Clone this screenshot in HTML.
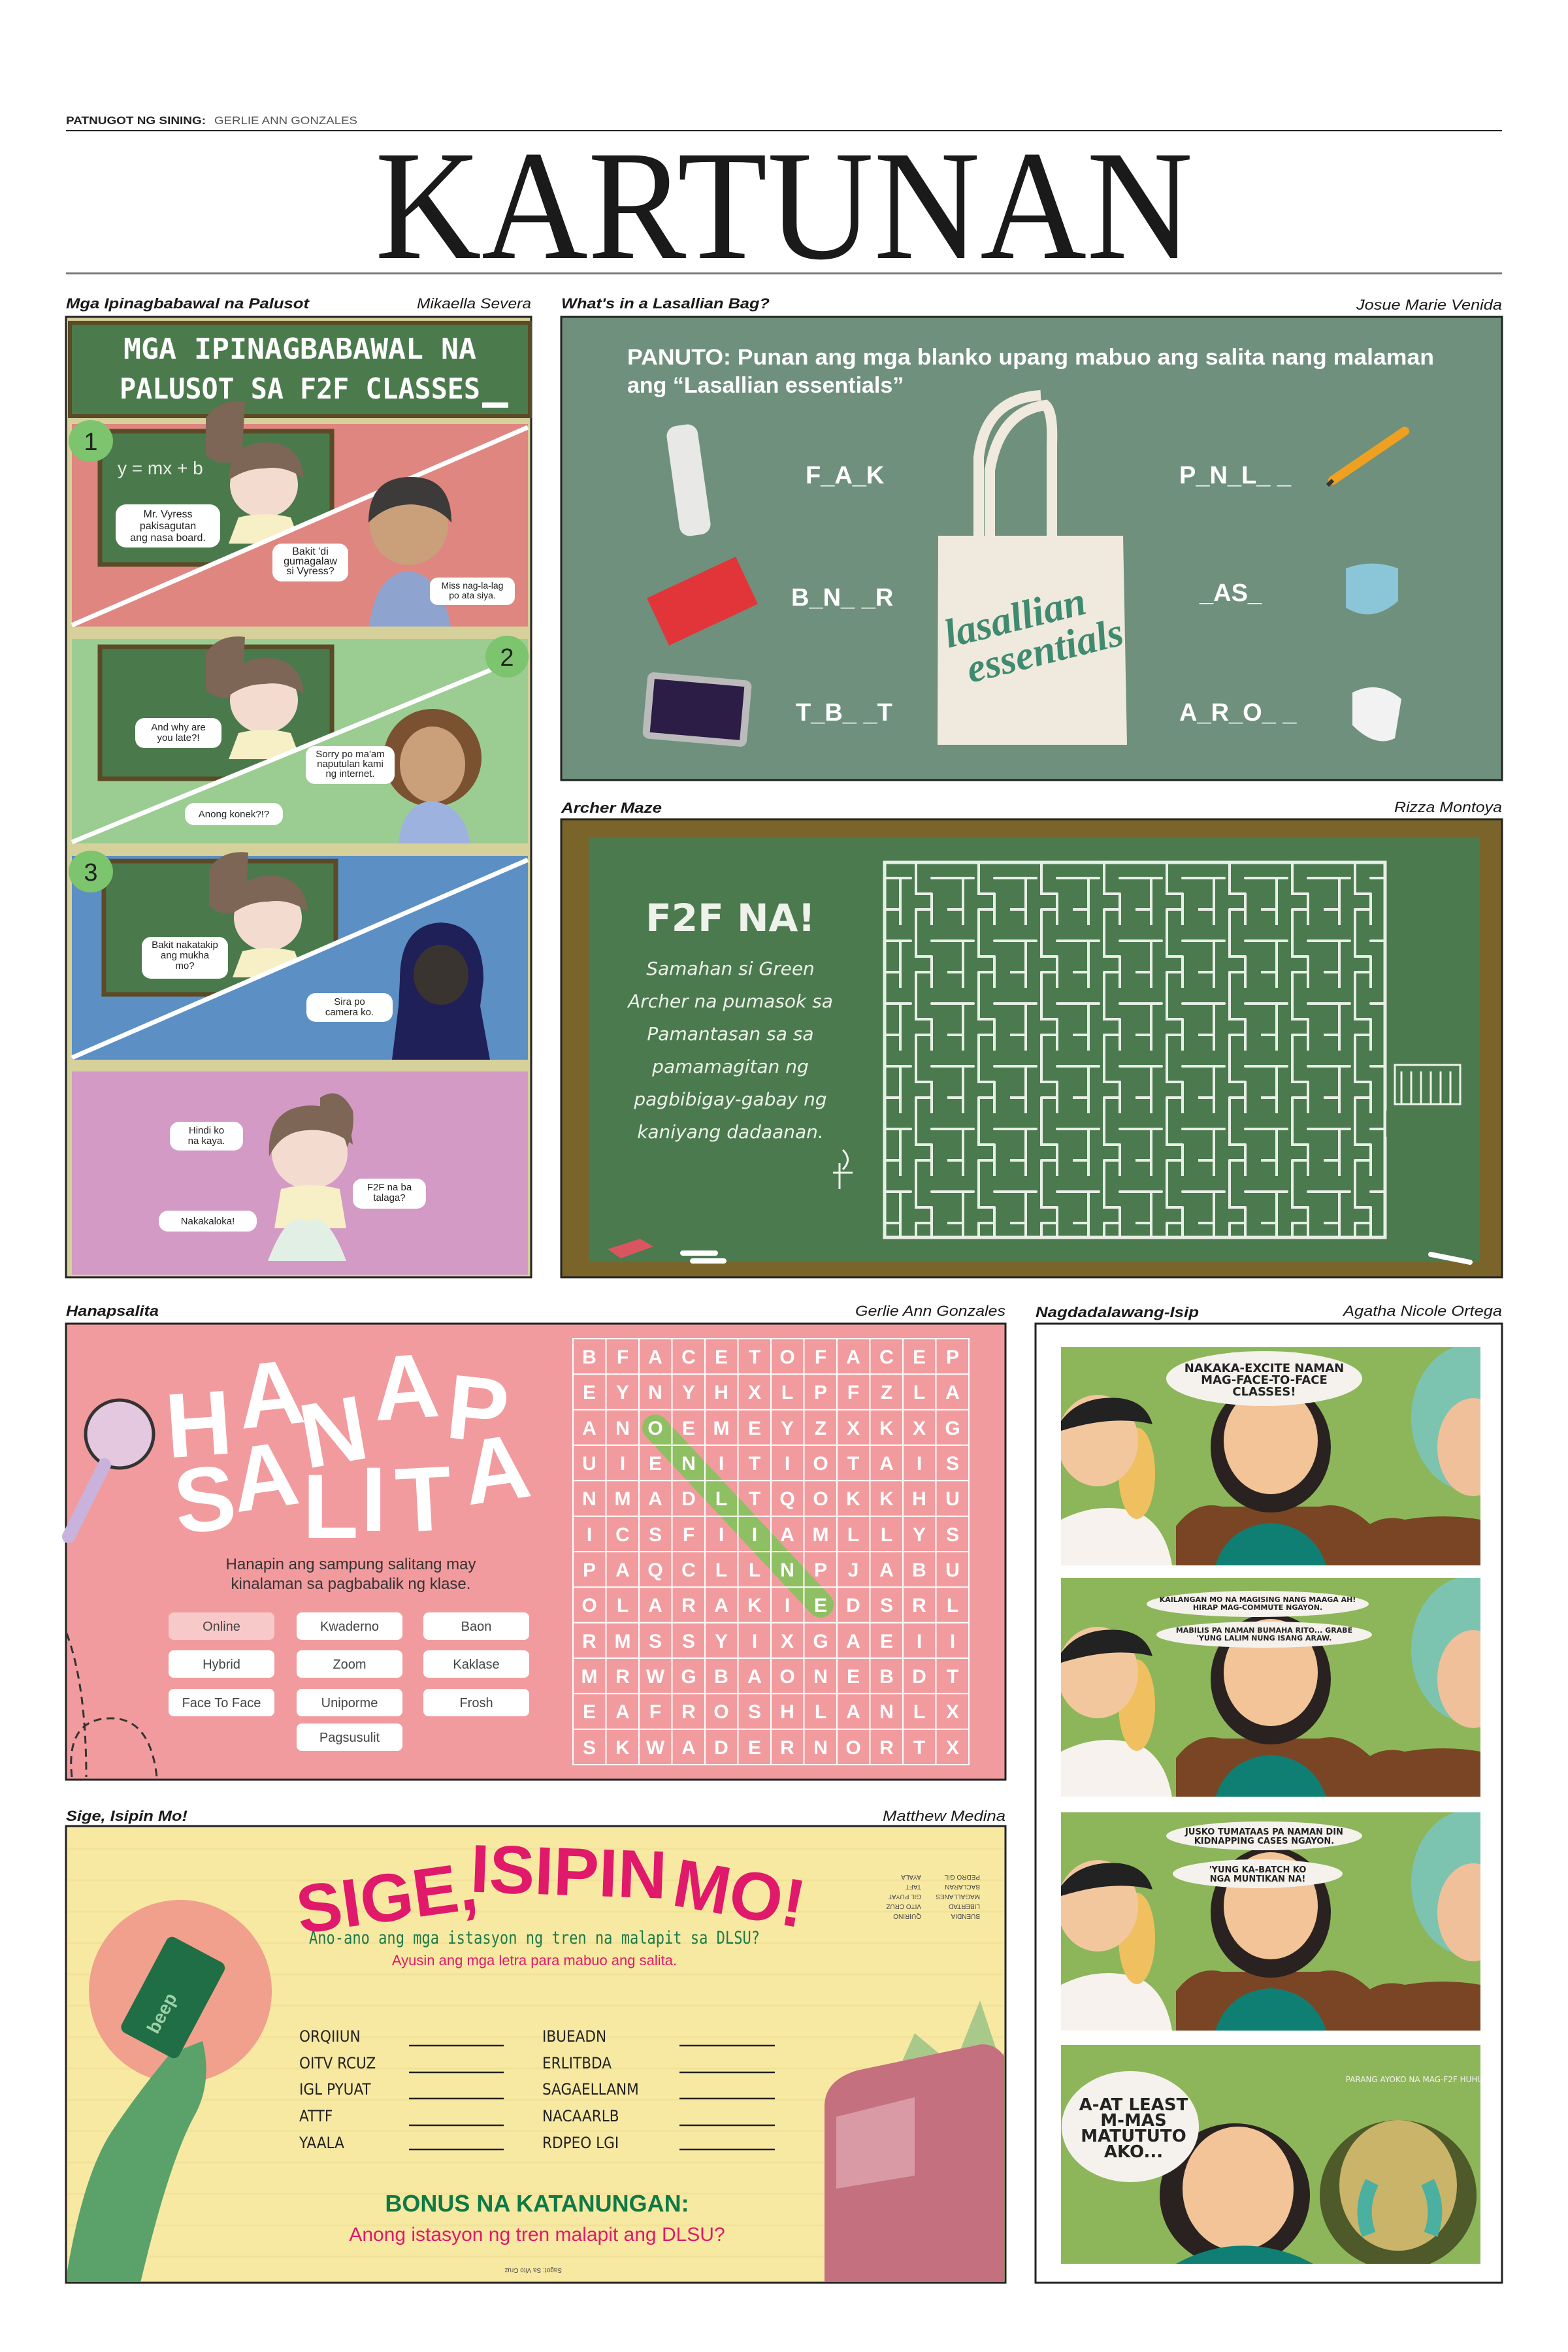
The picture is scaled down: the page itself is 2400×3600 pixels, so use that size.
<!DOCTYPE html>
<html><head><meta charset="utf-8"><style>html,body{margin:0;padding:0;background:#fff}svg{display:block}</style></head><body>
<svg width="2400" height="3600" viewBox="0 0 2400 3600" xmlns="http://www.w3.org/2000/svg" font-family="Liberation Sans, sans-serif">
<defs>
<pattern id="mz" x="1354" y="1320" width="96" height="96" patternUnits="userSpaceOnUse">
<g stroke="#e8efe6" stroke-width="4" fill="none" stroke-linecap="round">
<path d="M0 24H40M24 24V72M48 0V48H72M72 24H96M72 48V96M0 72H24M48 72H72M24 96V72M48 96V72"/>
</g></pattern>
<pattern id="lines" x="0" y="0" width="40" height="48" patternUnits="userSpaceOnUse"><path d="M0 46H40" stroke="#efdf95" stroke-width="3"/></pattern>
<clipPath id="c1"><rect x="1624" y="2062" width="642" height="334"/></clipPath>
<clipPath id="c2"><rect x="1624" y="2415" width="642" height="335"/></clipPath>
<clipPath id="c3"><rect x="1624" y="2774" width="642" height="334"/></clipPath>
<clipPath id="c4"><rect x="1624" y="3130" width="642" height="335"/></clipPath>
<clipPath id="cs"><rect x="103" y="2797" width="1434" height="695"/></clipPath>
</defs>

<!-- header -->
<text x="101" y="190" font-size="17" font-weight="bold" textLength="214" lengthAdjust="spacingAndGlyphs" fill="#222">PATNUGOT NG SINING:</text>
<text x="328" y="190" font-size="17" textLength="219" lengthAdjust="spacingAndGlyphs" fill="#555">GERLIE ANN GONZALES</text>
<rect x="101" y="199" width="2198" height="2" fill="#222"/>
<text x="574" y="395" font-family="Liberation Serif, serif" font-size="240" textLength="1252" lengthAdjust="spacingAndGlyphs" fill="#1a1a1a">KARTUNAN</text>
<rect x="101" y="417" width="2198" height="3" fill="#777"/>

<!-- section labels -->
<g font-size="22" fill="#1a1a1a">
<text x="101" y="472" font-weight="bold" font-style="italic" textLength="372" lengthAdjust="spacingAndGlyphs">Mga Ipinagbabawal na Palusot</text>
<text x="638" y="472" font-style="italic" textLength="175" lengthAdjust="spacingAndGlyphs">Mikaella Severa</text>
<text x="859" y="472" font-weight="bold" font-style="italic" textLength="319" lengthAdjust="spacingAndGlyphs">What's in a Lasallian Bag?</text>
<text x="2076" y="474" font-style="italic" textLength="223" lengthAdjust="spacingAndGlyphs">Josue Marie Venida</text>
<text x="859" y="1244" font-weight="bold" font-style="italic" textLength="154" lengthAdjust="spacingAndGlyphs">Archer Maze</text>
<text x="2134" y="1243" font-style="italic" textLength="165" lengthAdjust="spacingAndGlyphs">Rizza Montoya</text>
<text x="101" y="2014" font-weight="bold" font-style="italic" textLength="142" lengthAdjust="spacingAndGlyphs">Hanapsalita</text>
<text x="1309" y="2014" font-style="italic" textLength="230" lengthAdjust="spacingAndGlyphs">Gerlie Ann Gonzales</text>
<text x="1585" y="2016" font-weight="bold" font-style="italic" textLength="250" lengthAdjust="spacingAndGlyphs">Nagdadalawang-Isip</text>
<text x="2056" y="2014" font-style="italic" textLength="243" lengthAdjust="spacingAndGlyphs">Agatha Nicole Ortega</text>
<text x="101" y="2787" font-weight="bold" font-style="italic" textLength="186" lengthAdjust="spacingAndGlyphs">Sige, Isipin Mo!</text>
<text x="1351" y="2787" font-style="italic" textLength="188" lengthAdjust="spacingAndGlyphs">Matthew Medina</text>
</g>

<!-- ===== Panel 1 comic ===== -->
<rect x="101" y="485" width="712" height="1470" fill="#d6d09a" stroke="#222" stroke-width="3"/>
<rect x="107" y="494" width="704" height="143" fill="#4b7a4c" stroke="#5b4a26" stroke-width="6"/>
<g fill="#fff" font-family="DejaVu Sans Mono, monospace" font-weight="bold" font-size="44" text-anchor="middle">
<text x="459" y="549" textLength="540" lengthAdjust="spacingAndGlyphs">MGA IPINAGBABAWAL NA</text>
<text x="459" y="610" textLength="552" lengthAdjust="spacingAndGlyphs">PALUSOT SA F2F CLASSES</text>
</g>
<rect x="738" y="616" width="40" height="8" fill="#fff"/>
<!-- red -->
<rect x="110" y="649" width="698" height="310" fill="#df8680"/>
<rect x="153" y="660" width="355" height="204" fill="#4a7a4c" stroke="#5b4a26" stroke-width="7"/>
<text x="180" y="726" fill="#e8efe6" font-size="28">y = mx + b</text>
<path d="M315 640 q20 -30 60 -25 l-5 90 q-40 10 -55 -10z" fill="#7d6656"/>
<ellipse cx="404" cy="742" rx="52" ry="50" fill="#f3dccf"/>
<path d="M350 735 q0 -55 55 -58 q55 0 60 55 q-30 -20 -60 -15 q-30 0 -55 18z" fill="#7d6656"/>
<path d="M365 792 q40 -10 80 0 l15 40 h-110z" fill="#f7efc6"/>
<path d="M110 955 L808 652 L808 959 L110 959z" fill="#df8680"/>
<path d="M110 957 L808 654" stroke="#fff" stroke-width="7"/>
<ellipse cx="626" cy="803" rx="60" ry="62" fill="#c9a07a"/>
<path d="M564 800 q0 -70 65 -70 q62 0 62 70 q-20 -25 -60 -28 q-40 0 -67 28z" fill="#3d3b3a"/>
<path d="M565 959 q10 -80 60 -85 q50 5 65 85z" fill="#8ea4cf"/>
<g font-size="16" fill="#222" text-anchor="middle">
<rect x="177" y="772" width="160" height="66" rx="16" fill="#fff"/><text x="257" y="792">Mr. Vyress</text><text x="257" y="810">pakisagutan</text><text x="257" y="828">ang nasa board.</text>
<rect x="417" y="832" width="116" height="58" rx="14" fill="#fff"/><text x="475" y="849">Bakit 'di</text><text x="475" y="864">gumagalaw</text><text x="475" y="879">si Vyress?</text>
<rect x="658" y="884" width="130" height="42" rx="12" fill="#fff"/><text x="723" y="901" font-size="14">Miss nag-la-lag</text><text x="723" y="916" font-size="14">po ata siya.</text>
</g>
<ellipse cx="139" cy="675" rx="34" ry="32" fill="#7cc46e"/><text x="139" y="689" font-size="38" text-anchor="middle" fill="#222">1</text>
<!-- green -->
<rect x="110" y="978" width="698" height="313" fill="#9bcd92"/>
<rect x="153" y="990" width="355" height="202" fill="#4a7a4c" stroke="#5b4a26" stroke-width="7"/>
<path d="M315 1000 q20 -30 60 -25 l-5 90 q-40 10 -55 -10z" fill="#7d6656"/>
<ellipse cx="404" cy="1072" rx="52" ry="50" fill="#f3dccf"/>
<path d="M350 1065 q0 -55 55 -58 q55 0 60 55 q-30 -20 -60 -15 q-30 0 -55 18z" fill="#7d6656"/>
<path d="M365 1122 q40 -10 80 0 l15 40 h-110z" fill="#f7efc6"/>
<path d="M110 1288 L808 1000 L808 1291 L110 1291z" fill="#9bcd92"/>
<path d="M110 1289 L808 1002" stroke="#fff" stroke-width="7"/>
<ellipse cx="662" cy="1160" rx="75" ry="75" fill="#7a5232"/>
<ellipse cx="662" cy="1170" rx="50" ry="58" fill="#c9a07a"/>
<path d="M610 1291 q5 -60 50 -65 q50 5 60 65z" fill="#9eb2e0"/>
<g font-size="15" fill="#222" text-anchor="middle">
<rect x="207" y="1099" width="132" height="46" rx="14" fill="#fff"/><text x="273" y="1118">And why are</text><text x="273" y="1134">you late?!</text>
<rect x="468" y="1142" width="136" height="58" rx="14" fill="#fff"/><text x="536" y="1159">Sorry po ma'am</text><text x="536" y="1174">naputulan kami</text><text x="536" y="1189">ng internet.</text>
<rect x="283" y="1229" width="150" height="34" rx="14" fill="#fff"/><text x="358" y="1251">Anong konek?!?</text>
</g>
<ellipse cx="776" cy="1005" rx="33" ry="32" fill="#7cc46e"/><text x="776" y="1019" font-size="38" text-anchor="middle" fill="#222">2</text>
<!-- blue -->
<rect x="110" y="1310" width="698" height="312" fill="#5c8fc4"/>
<rect x="159" y="1318" width="355" height="204" fill="#4a7a4c" stroke="#5b4a26" stroke-width="7"/>
<path d="M320 1330 q20 -30 60 -25 l-5 90 q-40 10 -55 -10z" fill="#7d6656"/>
<ellipse cx="410" cy="1405" rx="52" ry="50" fill="#f3dccf"/>
<path d="M356 1398 q0 -55 55 -58 q55 0 60 55 q-30 -20 -60 -15 q-30 0 -55 18z" fill="#7d6656"/>
<path d="M371 1456 q40 -10 80 0 l15 40 h-110z" fill="#f7efc6"/>
<path d="M110 1618 L808 1315 L808 1622 L110 1622z" fill="#5c8fc4"/>
<path d="M110 1619 L808 1316" stroke="#fff" stroke-width="7"/>
<path d="M612 1500 q0 -85 63 -88 q65 3 65 88 l-5 40 l15 82 h-150 l10 -82z" fill="#1f2057"/>
<ellipse cx="675" cy="1492" rx="42" ry="46" fill="#3a3430"/>
<g font-size="15" fill="#222" text-anchor="middle">
<rect x="217" y="1434" width="132" height="64" rx="14" fill="#fff"/><text x="283" y="1451">Bakit nakatakip</text><text x="283" y="1467">ang mukha</text><text x="283" y="1483">mo?</text>
<rect x="469" y="1520" width="132" height="44" rx="14" fill="#fff"/><text x="535" y="1538">Sira po</text><text x="535" y="1554">camera ko.</text>
</g>
<ellipse cx="139" cy="1334" rx="34" ry="32" fill="#7cc46e"/><text x="139" y="1348" font-size="38" text-anchor="middle" fill="#222">3</text>
<!-- pink -->
<rect x="110" y="1640" width="698" height="311" fill="#d29ac4"/>
<path d="M490 1680 q30 -20 50 20 q5 40 -20 75 l-30 -40z" fill="#7d6656"/>
<ellipse cx="474" cy="1765" rx="58" ry="55" fill="#f3dccf"/>
<path d="M412 1770 q-5 -75 62 -78 q60 0 66 60 q-30 -25 -70 -22 q-40 2 -58 40z" fill="#7d6656"/>
<path d="M430 1820 q45 -12 90 0 l10 60 h-110z" fill="#f7efc6"/>
<path d="M410 1930 q30 -80 60 -60 q30 -20 60 60z" fill="#e2efe4"/>
<g font-size="15" fill="#222" text-anchor="middle">
<rect x="260" y="1717" width="112" height="44" rx="14" fill="#fff"/><text x="316" y="1735">Hindi ko</text><text x="316" y="1751">na kaya.</text>
<rect x="540" y="1804" width="112" height="46" rx="14" fill="#fff"/><text x="596" y="1822">F2F na ba</text><text x="596" y="1838">talaga?</text>
<rect x="243" y="1853" width="150" height="32" rx="14" fill="#fff"/><text x="318" y="1874">Nakakaloka!</text>
</g>

<!-- ===== Lasallian bag ===== -->
<rect x="859" y="485" width="1440" height="709" fill="#6f907d" stroke="#222" stroke-width="3"/>
<g fill="#fff" font-weight="bold">
<text x="960" y="558" font-size="34" textLength="1235" lengthAdjust="spacingAndGlyphs">PANUTO: Punan ang mga blanko upang mabuo ang salita nang malaman</text>
<text x="960" y="601" font-size="34">ang “Lasallian essentials”</text>
<g font-size="38">
<text x="1233" y="740">F_A_K</text><text x="1805" y="740">P_N_L_ _</text>
<text x="1211" y="927">B_N_ _R</text><text x="1836" y="920">_AS_</text>
<text x="1218" y="1103">T_B_ _T</text><text x="1805" y="1103">A_R_O_ _</text>
</g></g>
<path d="M1515 820 V720 q15 -90 85 -100 q12 10 10 60 V820 M1498 820 V700 q10 -90 95 -95" stroke="#efeadd" stroke-width="16" fill="none"/>
<path d="M1436 820 h283 l6 320 h-290z" fill="#efeadd"/>
<g fill="#3f8a70" font-family="Liberation Serif, serif" font-style="italic" font-weight="bold" transform="rotate(-14 1580 970)">
<text x="1450" y="960" font-size="62">lasallian</text><text x="1470" y="1020" font-size="62">essentials</text></g>
<rect x="1030" y="650" width="48" height="170" rx="16" fill="#e8e8e6" transform="rotate(-8 1054 735)"/>
<rect x="1000" y="880" width="150" height="80" fill="#e2353a" transform="rotate(-25 1075 920)"/>
<rect x="987" y="1035" width="160" height="102" rx="10" fill="#bbb" transform="rotate(5 1067 1086)"/>
<rect x="998" y="1045" width="138" height="82" fill="#2b1d45" transform="rotate(5 1067 1086)"/>
<path d="M2040 735 L2150 660" stroke="#f0a020" stroke-width="14" stroke-linecap="round"/>
<path d="M2040 735 l-8 8" stroke="#333" stroke-width="6"/>
<path d="M2060 870 q40 -15 80 0 v50 q-40 35 -80 10z" fill="#8ac6d8"/>
<path d="M2070 1060 q40 -20 75 10 l-10 60 q-30 15 -65 -20z" fill="#f2f2f2"/>

<!-- ===== Maze ===== -->
<rect x="859" y="1254" width="1440" height="701" fill="#7a6429" stroke="#222" stroke-width="3"/>
<rect x="901" y="1282" width="1364" height="650" fill="#4b7a4f"/>
<rect x="1354" y="1320" width="766" height="574" fill="url(#mz)"/>
<rect x="1354" y="1320" width="766" height="574" fill="none" stroke="#e8efe6" stroke-width="5"/>
<rect x="2122" y="1700" width="6" height="40" fill="#4b7a4f"/>
<g fill="#eef2ea" font-family="DejaVu Sans, sans-serif" text-anchor="middle">
<text x="1118" y="1425" font-size="58" font-weight="bold">F2F NA!</text>
<g font-size="28" font-style="italic">
<text x="1118" y="1492">Samahan si Green</text>
<text x="1118" y="1542">Archer na pumasok sa</text>
<text x="1118" y="1592">Pamantasan sa sa</text>
<text x="1118" y="1642">pamamagitan ng</text>
<text x="1118" y="1692">pagbibigay-gabay ng</text>
<text x="1118" y="1742">kaniyang dadaanan.</text></g></g>
<g stroke="#eef2ea" stroke-width="3" fill="none"><path d="M2135 1630 h100 v60 h-100z M2145 1640 v50 M2160 1640 v50 M2175 1640 v50 M2190 1640 v50 M2205 1640 v50 M2220 1640 v50"/>
<path d="M1285 1780 v40 M1275 1795 h30 M1290 1760 q15 15 0 30"/></g>
<path d="M930 1912 l50 -16 l20 12 l-50 18z" fill="#d9555f"/>
<path d="M1045 1918 h50 M1060 1930 h48 M2190 1920 l60 12" stroke="#fff" stroke-width="8" stroke-linecap="round"/>

<!-- ===== Hanapsalita ===== -->
<rect x="101" y="2026" width="1438" height="698" fill="#f29b9e" stroke="#222" stroke-width="3"/>
<g fill="#fff" font-weight="bold" font-size="140" text-anchor="middle">
<text x="304" y="2228" transform="rotate(-4 304 2180)">H</text>
<text x="414" y="2182" transform="rotate(-6 414 2130)">A</text>
<text x="510" y="2240" transform="rotate(-10 510 2190)">N</text>
<text x="621" y="2171" transform="rotate(-4 621 2120)">A</text>
<text x="731" y="2205" transform="rotate(6 731 2160)">P</text>
<text x="313" y="2343" transform="rotate(-6 313 2290)">S</text>
<text x="405" y="2308" transform="rotate(-8 405 2260)">A</text>
<text x="506" y="2354">L</text>
<text x="572" y="2343">I</text>
<text x="648" y="2343" transform="rotate(-3 648 2290)">T</text>
<text x="760" y="2297" transform="rotate(-8 760 2250)">A</text>
</g>
<circle cx="183" cy="2195" r="52" fill="#e4c8df" stroke="#333" stroke-width="5"/>
<path d="M160 2242 l-55 110" stroke="#c9b3dc" stroke-width="20" stroke-linecap="round"/>
<path d="M102 2500 q30 80 30 220 M110 2720 q-10 -90 60 -90 q60 0 70 90" stroke="#333" stroke-width="3" stroke-dasharray="12 8" fill="none"/>
<g fill="#333" font-size="24" text-anchor="middle">
<text x="537" y="2402">Hanapin ang sampung salitang may</text>
<text x="537" y="2432">kinalaman sa pagbabalik ng klase.</text></g>
<g font-size="20" fill="#444" text-anchor="middle">
<rect x="258" y="2468" width="162" height="42" rx="8" fill="#f7c9c9"/><text x="339" y="2496">Online</text>
<rect x="454" y="2468" width="162" height="42" rx="8" fill="#fff"/><text x="535" y="2496">Kwaderno</text>
<rect x="648" y="2468" width="162" height="42" rx="8" fill="#fff"/><text x="729" y="2496">Baon</text>
<rect x="258" y="2526" width="162" height="42" rx="8" fill="#fff"/><text x="339" y="2554">Hybrid</text>
<rect x="454" y="2526" width="162" height="42" rx="8" fill="#fff"/><text x="535" y="2554">Zoom</text>
<rect x="648" y="2526" width="162" height="42" rx="8" fill="#fff"/><text x="729" y="2554">Kaklase</text>
<rect x="258" y="2585" width="162" height="42" rx="8" fill="#fff"/><text x="339" y="2613">Face To Face</text>
<rect x="454" y="2585" width="162" height="42" rx="8" fill="#fff"/><text x="535" y="2613">Uniporme</text>
<rect x="648" y="2585" width="162" height="42" rx="8" fill="#fff"/><text x="729" y="2613">Frosh</text>
<rect x="454" y="2638" width="162" height="42" rx="8" fill="#fff"/><text x="535" y="2666">Pagsusulit</text>
</g>
<path d="M1003 2185 L1256 2456" stroke="#8fbf63" stroke-width="40" stroke-linecap="round"/>
<g stroke="#fff" stroke-width="2" fill="none">
<rect x="877" y="2049" width="606" height="652"/>
<path d="M927.5 2049V2701M978 2049V2701M1028.5 2049V2701M1079 2049V2701M1129.5 2049V2701M1180 2049V2701M1230.5 2049V2701M1281 2049V2701M1331.5 2049V2701M1382 2049V2701M1432.5 2049V2701"/>
<path d="M877 2103.3H1483M877 2157.7H1483M877 2212H1483M877 2266.3H1483M877 2320.7H1483M877 2375H1483M877 2429.3H1483M877 2483.7H1483M877 2538H1483M877 2592.3H1483M877 2646.7H1483"/>
</g>
<g fill="#fff" font-weight="bold" font-size="30" text-anchor="middle">
<text x="902" y="2087">B</text><text x="953" y="2087">F</text><text x="1003" y="2087">A</text><text x="1054" y="2087">C</text><text x="1104" y="2087">E</text><text x="1155" y="2087">T</text><text x="1205" y="2087">O</text><text x="1256" y="2087">F</text><text x="1306" y="2087">A</text><text x="1357" y="2087">C</text><text x="1407" y="2087">E</text><text x="1458" y="2087">P</text>
<text x="902" y="2141">E</text><text x="953" y="2141">Y</text><text x="1003" y="2141">N</text><text x="1054" y="2141">Y</text><text x="1104" y="2141">H</text><text x="1155" y="2141">X</text><text x="1205" y="2141">L</text><text x="1256" y="2141">P</text><text x="1306" y="2141">F</text><text x="1357" y="2141">Z</text><text x="1407" y="2141">L</text><text x="1458" y="2141">A</text>
<text x="902" y="2196">A</text><text x="953" y="2196">N</text><text x="1003" y="2196">O</text><text x="1054" y="2196">E</text><text x="1104" y="2196">M</text><text x="1155" y="2196">E</text><text x="1205" y="2196">Y</text><text x="1256" y="2196">Z</text><text x="1306" y="2196">X</text><text x="1357" y="2196">K</text><text x="1407" y="2196">X</text><text x="1458" y="2196">G</text>
<text x="902" y="2250">U</text><text x="953" y="2250">I</text><text x="1003" y="2250">E</text><text x="1054" y="2250">N</text><text x="1104" y="2250">I</text><text x="1155" y="2250">T</text><text x="1205" y="2250">I</text><text x="1256" y="2250">O</text><text x="1306" y="2250">T</text><text x="1357" y="2250">A</text><text x="1407" y="2250">I</text><text x="1458" y="2250">S</text>
<text x="902" y="2304">N</text><text x="953" y="2304">M</text><text x="1003" y="2304">A</text><text x="1054" y="2304">D</text><text x="1104" y="2304">L</text><text x="1155" y="2304">T</text><text x="1205" y="2304">Q</text><text x="1256" y="2304">O</text><text x="1306" y="2304">K</text><text x="1357" y="2304">K</text><text x="1407" y="2304">H</text><text x="1458" y="2304">U</text>
<text x="902" y="2359">I</text><text x="953" y="2359">C</text><text x="1003" y="2359">S</text><text x="1054" y="2359">F</text><text x="1104" y="2359">I</text><text x="1155" y="2359">I</text><text x="1205" y="2359">A</text><text x="1256" y="2359">M</text><text x="1306" y="2359">L</text><text x="1357" y="2359">L</text><text x="1407" y="2359">Y</text><text x="1458" y="2359">S</text>
<text x="902" y="2413">P</text><text x="953" y="2413">A</text><text x="1003" y="2413">Q</text><text x="1054" y="2413">C</text><text x="1104" y="2413">L</text><text x="1155" y="2413">L</text><text x="1205" y="2413">N</text><text x="1256" y="2413">P</text><text x="1306" y="2413">J</text><text x="1357" y="2413">A</text><text x="1407" y="2413">B</text><text x="1458" y="2413">U</text>
<text x="902" y="2467">O</text><text x="953" y="2467">L</text><text x="1003" y="2467">A</text><text x="1054" y="2467">R</text><text x="1104" y="2467">A</text><text x="1155" y="2467">K</text><text x="1205" y="2467">I</text><text x="1256" y="2467">E</text><text x="1306" y="2467">D</text><text x="1357" y="2467">S</text><text x="1407" y="2467">R</text><text x="1458" y="2467">L</text>
<text x="902" y="2522">R</text><text x="953" y="2522">M</text><text x="1003" y="2522">S</text><text x="1054" y="2522">S</text><text x="1104" y="2522">Y</text><text x="1155" y="2522">I</text><text x="1205" y="2522">X</text><text x="1256" y="2522">G</text><text x="1306" y="2522">A</text><text x="1357" y="2522">E</text><text x="1407" y="2522">I</text><text x="1458" y="2522">I</text>
<text x="902" y="2576">M</text><text x="953" y="2576">R</text><text x="1003" y="2576">W</text><text x="1054" y="2576">G</text><text x="1104" y="2576">B</text><text x="1155" y="2576">A</text><text x="1205" y="2576">O</text><text x="1256" y="2576">N</text><text x="1306" y="2576">E</text><text x="1357" y="2576">B</text><text x="1407" y="2576">D</text><text x="1458" y="2576">T</text>
<text x="902" y="2630">E</text><text x="953" y="2630">A</text><text x="1003" y="2630">F</text><text x="1054" y="2630">R</text><text x="1104" y="2630">O</text><text x="1155" y="2630">S</text><text x="1205" y="2630">H</text><text x="1256" y="2630">L</text><text x="1306" y="2630">A</text><text x="1357" y="2630">N</text><text x="1407" y="2630">L</text><text x="1458" y="2630">X</text>
<text x="902" y="2685">S</text><text x="953" y="2685">K</text><text x="1003" y="2685">W</text><text x="1054" y="2685">A</text><text x="1104" y="2685">D</text><text x="1155" y="2685">E</text><text x="1205" y="2685">R</text><text x="1256" y="2685">N</text><text x="1306" y="2685">O</text><text x="1357" y="2685">R</text><text x="1407" y="2685">T</text><text x="1458" y="2685">X</text>
</g>

<!-- ===== Sige ===== -->
<rect x="101" y="2795" width="1438" height="699" fill="#f8e9a2" stroke="#222" stroke-width="3"/>
<g clip-path="url(#cs)">
<rect x="103" y="2797" width="1434" height="695" fill="url(#lines)" opacity="0.7"/>
<circle cx="276" cy="3048" r="140" fill="#f0a08c"/>
<path d="M1380 3492 l-80 -130 l40 -60 l-60 -40 l80 -60 l40 -90 l60 50 l40 -100 l30 90 l20 -30 v370z" fill="#a8c98a"/>
<path d="M1262 3494 v-270 q0 -40 50 -55 l190 -40 q30 0 40 30 v335z" fill="#c4707f"/>
<path d="M1280 3240 l120 -30 v120 l-120 20z" fill="#d99aa6"/>
<path d="M100 3494 q25 -160 70 -230 q40 -60 90 -120 l50 -20 q15 60 -10 110 q-40 70 -85 260z" fill="#5aa26a"/>
<rect x="215" y="2975" width="100" height="165" rx="10" fill="#1f6e45" transform="rotate(28 265 3057)"/>
<text x="232" y="3120" font-size="28" font-weight="bold" fill="#9fd0a8" transform="rotate(-62 232 3110)">beep</text>
</g>
<g font-weight="bold" font-size="104" fill="#e0196b">
<text x="452" y="2945" transform="rotate(-8 560 2900)">SIGE,</text>
<text x="720" y="2900" transform="rotate(2 850 2870)">ISIPIN</text>
<text x="1030" y="2930" transform="rotate(10 1110 2900)">MO!</text></g>
<text x="818" y="2975" font-size="27" fill="#1a7a4a" text-anchor="middle" font-family="DejaVu Sans Mono, monospace" textLength="690" lengthAdjust="spacingAndGlyphs">Ano-ano ang mga istasyon ng tren na malapit sa DLSU?</text>
<text x="818" y="3008" font-size="22" fill="#e0196b" text-anchor="middle">Ayusin ang mga letra para mabuo ang salita.</text>
<g font-size="24" fill="#222" font-family="DejaVu Sans Condensed, DejaVu Sans, sans-serif">
<text x="458" y="3125">ORQIIUN</text><text x="458" y="3166">OITV RCUZ</text><text x="458" y="3206">IGL PYUAT</text><text x="458" y="3247">ATTF</text><text x="458" y="3288">YAALA</text>
<text x="830" y="3125">IBUEADN</text><text x="830" y="3166">ERLITBDA</text><text x="830" y="3206">SAGAELLANM</text><text x="830" y="3247">NACAARLB</text><text x="830" y="3288">RDPEO LGI</text></g>
<g stroke="#222" stroke-width="2.5">
<path d="M626 3131h145M626 3172h145M626 3212h145M626 3253h145M626 3290h145M1040 3131h146M1040 3172h146M1040 3212h146M1040 3253h146M1040 3290h146"/></g>
<text x="822" y="3385" font-size="36" font-weight="bold" fill="#0f7a45" text-anchor="middle">BONUS NA KATANUNGAN:</text>
<text x="822" y="3430" font-size="30" fill="#e0196b" text-anchor="middle">Anong istasyon ng tren malapit ang DLSU?</text>
<g font-size="10" fill="#444" transform="rotate(180 1440 2880)"><text x="1380" y="2830">BUENDIA</text><text x="1380" y="2845">LIBERTAD</text><text x="1380" y="2860">MAGALLANES</text><text x="1380" y="2875">BACLARAN</text><text x="1380" y="2890">PEDRO GIL</text><text x="1470" y="2830">QUIRINO</text><text x="1470" y="2845">VITO CRUZ</text><text x="1470" y="2860">GIL PUYAT</text><text x="1470" y="2875">TAFT</text><text x="1470" y="2890">AYALA</text></g>
<text x="860" y="3478" font-size="10" fill="#444" transform="rotate(180 860 3475)">Sagot: Sa Vito Cruz</text>

<!-- ===== Nagdadalawang-Isip ===== -->
<rect x="1585" y="2026" width="714" height="1468" fill="#fff" stroke="#222" stroke-width="3"/>
<g clip-path="url(#c1)">
<rect x="1624" y="2062" width="642" height="334" fill="#8db65a"/>
<g id="trio">
<path d="M1624 2396 v-70 q60 -30 120 -10 q40 20 50 80z" fill="#f7f2ee"/>
<ellipse cx="1740" cy="2255" rx="28" ry="70" fill="#f0c060"/>
<ellipse cx="1680" cy="2205" rx="62" ry="70" fill="#f3c79d"/>
<path d="M1624 2175 q30 -40 90 -35 q40 5 50 40 q-60 -15 -140 10z" fill="#222"/>
<path d="M1800 2396 v-60 q30 -40 70 -30 h150 q40 -10 80 30 v60z" fill="#7a4524"/>
<ellipse cx="1945" cy="2215" rx="92" ry="100" fill="#2a2220"/>
<ellipse cx="1945" cy="2205" rx="72" ry="82" fill="#f2c497"/>
<path d="M1860 2396 q20 -60 85 -65 q65 5 85 65z" fill="#0f7f74"/>
<path d="M2080 2396 v-50 q30 -30 70 -20 q60 -10 116 0 v70z" fill="#7a4524"/>
<ellipse cx="2250" cy="2170" rx="90" ry="112" fill="#7cc4b0"/>
<ellipse cx="2255" cy="2215" rx="55" ry="75" fill="#f0c09a"/>
</g>
<ellipse cx="1935" cy="2110" rx="150" ry="42" fill="#f5f2ee"/>
<g font-size="18" font-weight="bold" fill="#222" text-anchor="middle" font-family="DejaVu Sans, sans-serif"><text x="1935" y="2100">NAKAKA-EXCITE NAMAN</text><text x="1935" y="2118">MAG-FACE-TO-FACE</text><text x="1935" y="2136">CLASSES!</text></g>
</g>
<g clip-path="url(#c2)">
<rect x="1624" y="2415" width="642" height="335" fill="#8db65a"/>
<use href="#trio" transform="translate(0 355)"/>
<ellipse cx="1925" cy="2455" rx="170" ry="20" fill="#f5f2ee"/>
<ellipse cx="1935" cy="2502" rx="165" ry="20" fill="#f5f2ee"/>
<g font-size="11" font-weight="bold" fill="#222" text-anchor="middle" font-family="DejaVu Sans, sans-serif">
<text x="1925" y="2452">KAILANGAN MO NA MAGISING NANG MAAGA AH!</text><text x="1925" y="2464">HIRAP MAG-COMMUTE NGAYON.</text>
<text x="1935" y="2499">MABILIS PA NAMAN BUMAHA RITO... GRABE</text><text x="1935" y="2511">'YUNG LALIM NUNG ISANG ARAW.</text></g>
</g>
<g clip-path="url(#c3)">
<rect x="1624" y="2774" width="642" height="334" fill="#8db65a"/>
<use href="#trio" transform="translate(0 712)"/>
<ellipse cx="1935" cy="2810" rx="150" ry="22" fill="#f5f2ee"/>
<ellipse cx="1925" cy="2868" rx="130" ry="22" fill="#f5f2ee"/>
<g font-size="13" font-weight="bold" fill="#222" text-anchor="middle" font-family="DejaVu Sans, sans-serif">
<text x="1935" y="2808">JUSKO TUMATAAS PA NAMAN DIN</text><text x="1935" y="2822">KIDNAPPING CASES NGAYON.</text>
<text x="1925" y="2866">'YUNG KA-BATCH KO</text><text x="1925" y="2880">NGA MUNTIKAN NA!</text></g>
</g>
<g clip-path="url(#c4)">
<rect x="1624" y="3130" width="642" height="335" fill="#8db65a"/>
<ellipse cx="1890" cy="3360" rx="115" ry="110" fill="#2a2220"/>
<ellipse cx="1895" cy="3350" rx="85" ry="95" fill="#f2c497"/>
<path d="M1800 3465 q90 -50 190 -10 l20 10z" fill="#0f7f74"/>
<ellipse cx="2140" cy="3360" rx="120" ry="115" fill="#4e5a2a"/>
<ellipse cx="2140" cy="3345" rx="90" ry="100" fill="#c9b46a"/>
<path d="M2100 3340 q-20 40 -5 80 M2185 3340 q20 40 5 80" stroke="#4bb0a0" stroke-width="22" fill="none"/>
<ellipse cx="1730" cy="3255" rx="105" ry="85" fill="#f5f2ee"/>
<g font-size="26" font-weight="bold" fill="#222" text-anchor="middle" font-family="DejaVu Sans, sans-serif"><text x="1735" y="3230">A-AT LEAST</text><text x="1735" y="3254">M-MAS</text><text x="1735" y="3278">MATUTUTO</text><text x="1735" y="3302">AKO...</text></g>
<text x="2165" y="3187" font-size="12" fill="#f5f2ee" text-anchor="middle" font-family="DejaVu Sans, sans-serif">PARANG AYOKO NA MAG-F2F HUHU</text>
</g>
</svg>
</body></html>
